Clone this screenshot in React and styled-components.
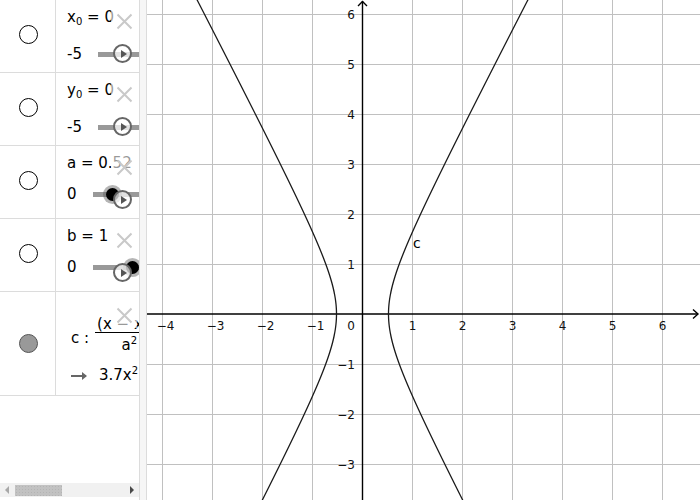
import styled, { createGlobalStyle } from 'styled-components';

const Global = createGlobalStyle`
  html, body {
    margin: 0;
    padding: 0;
    background: #fff;
    font-family: "DejaVu Sans", "Noto Sans", sans-serif;
  }
`

const Page = styled.div`
  display: flex;
  width: 700px;
  height: 500px;
  overflow: hidden;
  background: #fff;
`

const Panel = styled.div`
  width: 139px;
  flex: none;
  display: flex;
  flex-direction: column;
  overflow: hidden;
`

const Splitter = styled.div`
  width: 8px;
  flex: none;
  box-sizing: border-box;
  background: #f6f6f6;
  border-left: 1px solid #dcdcdc;
  border-right: 1px solid #dcdcdc;
`

const Graph = styled.div`
  flex: 1;
  position: relative;
  svg { display: block; }
`

const Row = styled.div`
  display: grid;
  grid-template-columns: 56px 200px;
  height: ${p => p.$h}px;
  flex: none;
  border-bottom: 1px solid #dcdcdc;
`

const MarkerCell = styled.div`
  border-right: 1px solid #dcdcdc;
  display: flex;
  align-items: center;
  justify-content: center;
  padding-bottom: ${p => p.$lift || 0}px;
`

const Marker = styled.div`
  width: 19px;
  height: 19px;
  box-sizing: border-box;
  border-radius: 50%;
  border: 1px solid ${p => (p.$on ? '#555' : '#000')};
  background: ${p => (p.$on ? '#999' : '#fff')};
  margin-left: 1px;
`

const Content = styled.div`
  position: relative;
  padding-left: ${p => p.$pad || 11}px;
  color: #000;
  font-size: 15px;
  white-space: nowrap;
`

const Label = styled.div`
  height: 18px;
  line-height: 18px;
  padding-top: 8px;
`

const Sub = styled.span`
  font-size: 10px;
  line-height: 1;
  vertical-align: -3px;
`

const Sup = styled.span`
  font-size: 10px;
  line-height: 1;
  vertical-align: 6px;
`

const SliderLine = styled.div`
  display: flex;
  align-items: center;
  gap: 16px;
  height: 18px;
  line-height: 18px;
  margin-top: ${p => p.$gap}px;
`

const Track = styled.div`
  position: relative;
  width: 150px;
  height: 5px;
  background: #999;
  flex: none;
`

const Knob = styled.div`
  position: absolute;
  top: 50%;
  width: 13px;
  height: 13px;
  margin: -6.5px 0 0 -6.5px;
  border-radius: 50%;
  background: #000;
  box-shadow: 0 0 0 3px rgba(90, 90, 90, 0.45);
`

const PlayButton = styled.div`
  position: absolute;
  left: 57px;
  top: 44px;
  width: 19px;
  height: 19px;
  box-sizing: border-box;
  border-radius: 50%;
  border: 2px solid #666;
  background: rgba(255, 255, 255, 0.7);
  display: flex;
  align-items: center;
  justify-content: center;
  &::after {
    content: "";
    margin-left: 2px;
    border-left: 6px solid #555;
    border-top: 4px solid transparent;
    border-bottom: 4px solid transparent;
  }
`

const CloseButton = styled.div`
  position: absolute;
  left: 55px;
  top: ${p => p.$top || 8}px;
  width: 26px;
  height: 26px;
  background: rgba(255, 255, 255, 0.6);
  display: flex;
  align-items: center;
  justify-content: center;
`

const Formula = styled.div`
  display: flex;
  align-items: flex-start;
  height: 40px;
  padding-top: 23px;
`

const Name = styled.span`
  height: 18px;
  line-height: 18px;
  margin-top: 14px;
  margin-right: 4px;
`

const Fraction = styled.span`
  display: inline-flex;
  flex-direction: column;
  align-items: center;
  padding: 0 2px;
`

const Numer = styled.span`
  height: 17px;
  line-height: 17px;
  padding: 0 2px;
  border-bottom: 1px solid #000;
`

const Denom = styled.span`
  height: 18px;
  line-height: 18px;
  margin-top: 3px;
`

const Output = styled.div`
  display: flex;
  align-items: center;
  gap: 13px;
  height: 18px;
  line-height: 18px;
  margin-top: 11px;
`

const Arrow = styled.span`
  display: inline-block;
  position: relative;
  width: 15px;
  height: 2px;
  background: #666;
  margin-top: 1px;
  &::after {
    content: "";
    position: absolute;
    right: -1px;
    top: -3px;
    border-left: 5px solid #666;
    border-top: 4px solid transparent;
    border-bottom: 4px solid transparent;
  }
`

const Filler = styled.div`
  flex: 1;
`

const Scrollbar = styled.div`
  height: 14px;
  flex: none;
  margin-bottom: 3px;
  background: #f1f1f1;
  display: flex;
  align-items: center;
  padding: 0 5px;
`

const ScrollArrow = styled.span`
  width: 0;
  height: 0;
  border-top: 4px solid transparent;
  border-bottom: 4px solid transparent;
  ${p => (p.$dir === 'left'
    ? 'border-right: 4px solid #a8a8a8;'
    : 'border-left: 4px solid #4a4a4a; margin-left: auto;')}
`

const Thumb = styled.div`
  width: 47px;
  height: 11px;
  margin-left: 6px;
  background-color: #c2c2c2;
  background-image: radial-gradient(#b4b4b4 0.6px, transparent 0.8px);
  background-size: 3px 3px;
`

const Cross = () => (
  <svg width="17" height="17" viewBox="0 0 17 17">
    <path d="M1.5 1.5 L15.5 15.5 M15.5 1.5 L1.5 15.5" stroke="#c9c9c9" strokeWidth="2" fill="none" />
  </svg>
)

const SliderRow = ({ name, sub, value, min, knob, gap }) => (
  <Row $h={72}>
    <MarkerCell $lift={4}><Marker /></MarkerCell>
    <Content>
      <Label>{name}{sub && <Sub>{sub}</Sub>} = {value}</Label>
      <SliderLine $gap={gap}>
        <span>{min}</span>
        <Track>{knob != null && <Knob style={{ left: knob }} />}</Track>
      </SliderLine>
      <PlayButton />
      <CloseButton><Cross /></CloseButton>
    </Content>
  </Row>
)

// graph geometry, page coordinates
const OX = 362.5, OY = 314, U = 50
const gx = v => OX + v * U
const gy = v => OY - v * U
const A = 0.52, B = 1

const branch = sign => {
  const pts = []
  for (let y = -3.9; y <= 6.5; y += 0.05) {
    const x = sign * A * Math.sqrt(1 + (y * y) / (B * B))
    pts.push(`${gx(x).toFixed(2)},${gy(y).toFixed(2)}`)
  }
  return pts.join(' ')
}

const xs = [-4, -3, -2, -1, 1, 2, 3, 4, 5, 6]
const ys = [-3, -2, -1, 1, 2, 3, 4, 5, 6]
const fmt = n => (n < 0 ? '\u2212' + Math.abs(n) : String(n))

const Plot = () => (
  <svg width="553" height="500" viewBox="147 0 553 500">
    <g stroke="#c0c0c0" strokeWidth="1" shapeRendering="crispEdges">
      {xs.map(v => <line key={'v' + v} x1={gx(v)} y1="0" x2={gx(v)} y2="500" />)}
      {ys.map(v => <line key={'h' + v} x1="147" y1={gy(v)} x2="700" y2={gy(v)} />)}
    </g>
    <g stroke="#000" strokeWidth="1.4" fill="none">
      <line x1="147" y1={OY} x2="698" y2={OY} />
      <line x1={OX} y1="500" x2={OX} y2="1" />
      <polyline points={`693,309.5 698,314 693,318.5`} />
      <polyline points={`358,6 ${OX},1.5 367,6`} />
    </g>
    <g fontFamily='"DejaVu Sans", sans-serif' fontSize="12" fill="#111">
      {xs.map(v => (
        <text key={'xl' + v} x={gx(v) + (v < 0 ? 3 : 0)} y="330" textAnchor="middle">{fmt(v)}</text>
      ))}
      <text x="351" y="330" textAnchor="middle">0</text>
      {ys.map(v => (
        <text key={'yl' + v} x="355" y={gy(v) + 4.5} textAnchor="end">{fmt(v)}</text>
      ))}
    </g>
    <g stroke="#1a1a1a" strokeWidth="1.3" fill="none">
      <polyline points={branch(1)} />
      <polyline points={branch(-1)} />
    </g>
    <text x="413" y="248" fontFamily='"DejaVu Sans", sans-serif' fontSize="14" fill="#000">c</text>
  </svg>
)

const App = () => {
  return (
    <Page>
      <Global />
      <Panel>
        <SliderRow name="x" sub="0" value="0" min="-5" gap={19} />
        <SliderRow name="y" sub="0" value="0" min="-5" gap={19} />
        <SliderRow name="a" value="0.52" min="0" knob={20} gap={13} />
        <SliderRow name="b" value="1" min="0" knob={40} gap={13} />
        <Row $h={103}>
          <MarkerCell><Marker $on /></MarkerCell>
          <Content $pad={15}>
            <Formula>
              <Name>c :</Name>
              <Fraction>
                <Numer>(x − x<Sub>0</Sub>)<Sup>2</Sup></Numer>
                <Denom>a<Sup>2</Sup></Denom>
              </Fraction>
              <Name> − </Name>
              <Fraction>
                <Numer>(y − y<Sub>0</Sub>)<Sup>2</Sup></Numer>
                <Denom>b<Sup>2</Sup></Denom>
              </Fraction>
              <Name> = 1</Name>
            </Formula>
            <Output>
              <Arrow />
              <span>3.7x<Sup>2</Sup> − y<Sup>2</Sup> = 1</span>
            </Output>
            <CloseButton $top={10}><Cross /></CloseButton>
          </Content>
        </Row>
        <Filler />
        <Scrollbar>
          <ScrollArrow $dir="left" />
          <Thumb />
          <ScrollArrow $dir="right" />
        </Scrollbar>
      </Panel>
      <Splitter />
      <Graph>
        <Plot />
      </Graph>
    </Page>
  );
}

export default App;
